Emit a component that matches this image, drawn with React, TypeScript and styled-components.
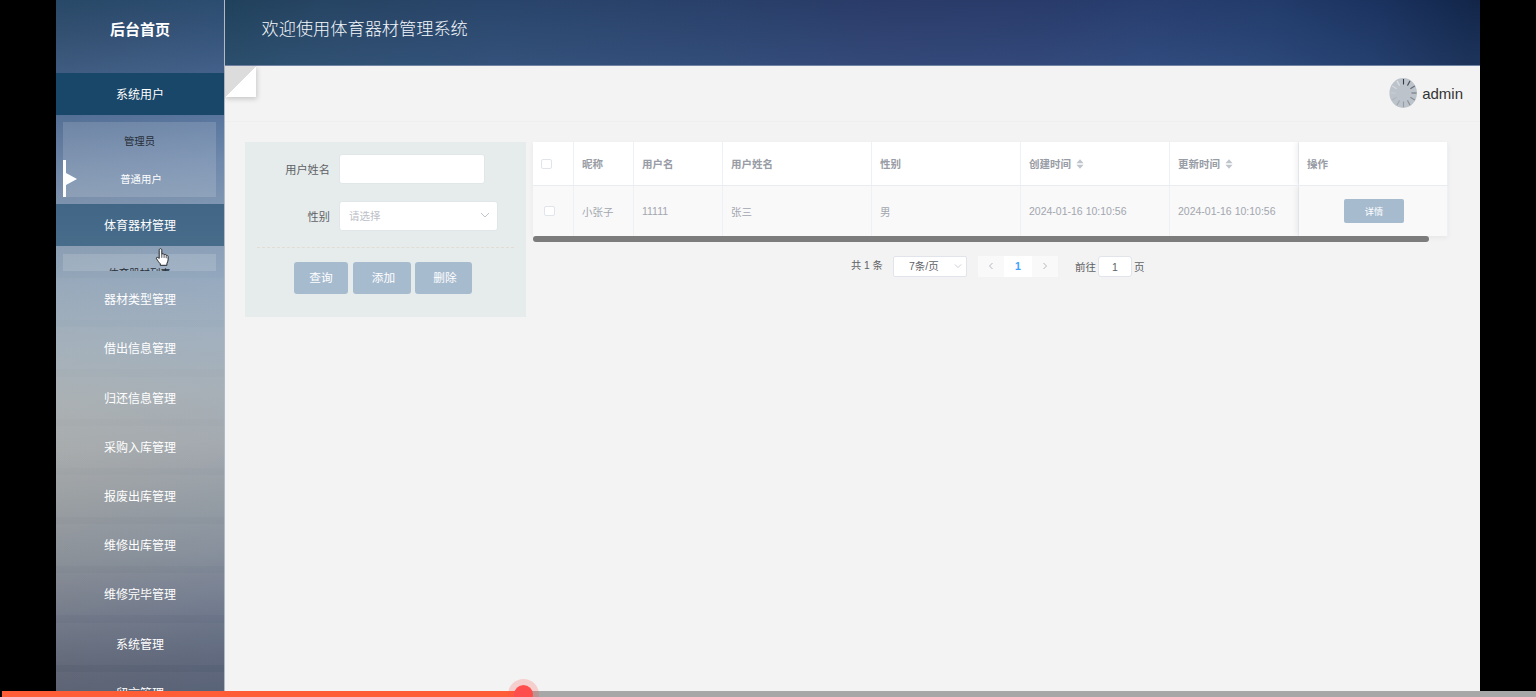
import React from 'react';
import styled, { createGlobalStyle, css } from 'styled-components';

const GlobalStyle = createGlobalStyle`
  * { box-sizing: border-box; }
  body {
    margin: 0;
    background: #000;
    font-family: "Liberation Sans", "Noto Sans CJK SC", sans-serif;
    overflow: hidden;
  }
  button, input { font-family: inherit; }
`;

const Screen = styled.div`
  position: relative;
  height: 697px;
  padding: 0 56px;
  background: #000;
  overflow: hidden;
`;

const Shell = styled.div`
  display: flex;
  height: 697px;
  background: #f3f3f3;
`;

const Sidebar = styled.aside`
  flex: none;
  width: 169px;
  height: 697px;
  overflow: hidden;
  border-right: 1px solid #b1bac5;
  background:
    linear-gradient(90deg, rgba(150, 150, 140, 0.08), rgba(120, 150, 190, 0.1)),
    linear-gradient(176deg, #1f4264 0, #2a496e 32px, #3b5982 80px, #526f98 122px, #6f88aa 175px, #8499b2 225px,
      #95a9bd 285px, #a3b1bd 345px, #aab1b5 400px, #a7abad 450px, #989da2 500px, #868d96 560px, #6d7486 618px,
      #596173 665px, #4e566a 710px);
`;

const Home = styled.div`
  height: 73px;
  padding-top: 19px;
  color: #fff;
  font-size: 15px;
  line-height: 22px;
  font-weight: 700;
  text-align: center;
`;

const Menu = styled.nav`
  display: flex;
  flex-direction: column;
  gap: 7.2px;
`;

const MenuItem = styled.div<{ $tone?: 'active' | 'hover' }>`
  flex: none;
  height: 42px;
  line-height: 44px;
  font-size: 12px;
  color: #fff;
  text-align: center;
  background: ${({ $tone }) =>
    $tone === 'active' ? '#194769' : $tone === 'hover' ? 'linear-gradient(#416686, #486d8b)' : 'rgba(255, 255, 255, 0.03)'};
`;

const SubMenu = styled.div<{ $height: number }>`
  flex: none;
  height: ${({ $height }) => $height}px;
  margin: 0 8px 0 7px;
  overflow: hidden;
  background: rgba(255, 255, 255, 0.14);
`;

const SubItem = styled.div<{ $current?: boolean }>`
  position: relative;
  height: 37.5px;
  line-height: 39px;
  font-size: 10.4px;
  text-align: center;
  color: #272e39;
  ${({ $current }) =>
    $current &&
    css`
      color: #fff;
      border-left: 3px solid #fff;
      &::before {
        content: '';
        position: absolute;
        left: 0;
        top: 13px;
        border: 6px solid transparent;
        border-left: 11px solid #fff;
        border-right: 0;
      }
    `}
`;

const Main = styled.main`
  flex: 1;
  min-width: 0;
`;

const Header = styled.header`
  height: 66px;
  padding: 16px 36.500px;
  border-bottom: 1px solid #7284a4;
  color: #f4f7fa;
  font-size: 17.2px;
  font-weight: 300;
  line-height: 26px;
  background:
    linear-gradient(180deg, rgba(20, 35, 70, 0.14), rgba(80, 115, 165, 0.18)),
    linear-gradient(97deg, #22465f 0, #294967 90px, #2d4a71 280px, #2c4570 490px, #2e3f6e 650px, #2c3f70 810px,
      #2a4275 920px, #243f70 1040px, #1b3462 1150px, #12264a 1240px);
`;

const UserBar = styled.div`
  position: relative;
  display: flex;
  justify-content: flex-end;
  align-items: center;
  gap: 5px;
  height: 56px;
  padding: 0 17px 1px 0;
  border-bottom: 1px solid #efefef;
  font-size: 15px;
  color: #333;
`;

const UserName = styled.span`
  padding-top: 1px;
  line-height: 18px;
`;

const Fold = styled.div`
  position: absolute;
  left: 0;
  top: 0;
  width: 31px;
  height: 31px;
  background: linear-gradient(135deg, #dcdcdc 50%, #fff 50.5%);
  box-shadow: 1px 2px 5px rgba(0, 0, 0, 0.18);
`;

const Content = styled.section`
  display: flex;
  align-items: flex-start;
  gap: 7px;
  padding: 20px 32px 0 20px;
`;

const Filter = styled.form`
  flex: none;
  width: 281px;
  height: 175px;
  padding: 12px 12px 0;
  background: #e6ecec;
`;

const Field = styled.div<{ $gap: number }>`
  display: flex;
  align-items: center;
  gap: 9px;
  height: 30px;
  margin-bottom: ${({ $gap }) => $gap}px;
`;

const Label = styled.label`
  width: 73px;
  padding-bottom: 1px;
  text-align: right;
  font-size: 11.2px;
  color: #606266;
`;

const TextInput = styled.input`
  width: 146px;
  height: 30px;
  border: 1px solid #e1e6e9;
  border-radius: 3px;
  background: #fff;
`;

const Select = styled.div`
  display: flex;
  align-items: center;
  justify-content: space-between;
  width: 159px;
  height: 30px;
  padding: 0 7px 2px 9px;
  border: 1px solid #e1e6e9;
  border-radius: 3px;
  background: #fff;
  font-size: 10.5px;
  color: #bcc0c8;
`;

const Actions = styled.div`
  display: flex;
  height: 47px;
  padding: 14px 0 0 37px;
  border-top: 1px dashed #e2dcd4;
`;

const Button = styled.button<{ $width: number; $gap?: number; $shift?: number }>`
  flex: none;
  width: ${({ $width }) => $width}px;
  height: 32px;
  margin-right: ${({ $gap = 0 }) => $gap}px;
  padding: 0 0 3px ${({ $shift = 0 }) => $shift}px;
  border: 0;
  border-radius: 3px;
  background: #a7bbcf;
  color: #fff;
  font-size: 11.7px;
`;

const Results = styled.div`
  flex: 1;
  min-width: 0;
`;

const Grid = styled.div`
  position: relative;
  height: 94px;
  box-shadow: 0 2px 5px rgba(0, 0, 0, 0.05);
`;

const Row = styled.div<{ $head?: boolean }>`
  display: grid;
  grid-template-columns: 41px 60px 89px 149px 149px 149px 129px 149px;
  height: ${({ $head }) => ($head ? 44 : 50)}px;
  background: ${({ $head }) => ($head ? '#fff' : '#f9f9f9')};
  border-bottom: ${({ $head }) => ($head ? '1px solid #e9edf2' : '0')};
  color: ${({ $head }) => ($head ? '#989ca5' : '#a2a6af')};
  font-size: 10.5px;
  font-weight: ${({ $head }) => ($head ? 700 : 400)};
`;

const Cell = styled.div<{ $pad?: number; $fixed?: boolean }>`
  display: flex;
  align-items: center;
  gap: 5px;
  min-width: 0;
  padding-left: ${({ $pad = 8 }) => $pad}px;
  border-right: 1px solid #edf0f5;
  white-space: nowrap;
  ${({ $fixed }) =>
    $fixed &&
    css`
      background: inherit;
      box-shadow: -3px 0 5px rgba(0, 0, 0, 0.06);
      clip-path: inset(0 0 0 -10px);
    `}
`;

const Check = styled.span`
  width: 11px;
  height: 10px;
  border: 1px solid #e1e4ea;
  border-radius: 2px;
  background: #fff;
`;

const Detail = styled.button`
  width: 60px;
  height: 24px;
  padding: 0;
  border: 0;
  border-radius: 2px;
  background: #a7bbcf;
  color: #fff;
  font-size: 9.2px;
`;

const ScrollThumb = styled.div`
  position: relative;
  width: 896px;
  height: 6px;
  border-radius: 3px;
  background: #7c7c7d;
`;

const Pager = styled.div`
  display: flex;
  align-items: center;
  height: 21px;
  margin: 14px 0 0 318px;
  font-size: 10.5px;
  line-height: 16px;
  color: #606266;
  white-space: nowrap;
`;

const Total = styled.span`
  width: 42px;
  padding-bottom: 2px;
  font-size: 10.2px;
`;

const SizeSelect = styled.span`
  display: flex;
  align-items: center;
  justify-content: space-between;
  width: 74px;
  height: 21px;
  margin-right: 11px;
  padding: 0 4px 2px 15px;
  border: 1px solid #e1e4ea;
  border-radius: 2px;
  background: #fff;
`;

const PageCell = styled.span<{ $current?: boolean; $width: number }>`
  display: flex;
  align-items: center;
  justify-content: center;
  width: ${({ $width }) => $width}px;
  height: 21px;
  padding-bottom: 1px;
  background: ${({ $current }) => ($current ? '#fff' : '#f9f9f9')};
  color: #409eff;
  font-weight: 700;
`;

const Jump = styled.span`
  display: flex;
  align-items: center;
  gap: 2px;
  margin-left: 17px;
`;

const JumpBox = styled.span`
  display: flex;
  align-items: center;
  justify-content: center;
  width: 34px;
  height: 21px;
  border: 1px solid #e1e4ea;
  border-radius: 3px;
  background: #fff;
`;

const Track = styled.div`
  position: absolute;
  left: 2px;
  right: 0;
  bottom: 0;
  height: 6px;
  background: #a7a7a7;
`;

const Played = styled.div`
  width: 522px;
  height: 6px;
  background: #ff5c38;
`;

const Knob = styled.div`
  position: absolute;
  left: 506px;
  top: -12px;
  width: 31px;
  height: 31px;
  border: 6.5px solid rgba(255, 77, 77, 0.22);
  border-radius: 50%;
  background: #ff4d4d;
  background-clip: padding-box;
`;

const Pointer = styled.svg`
  position: absolute;
  left: 154px;
  top: 247px;
`;

const Chevron = ({ d, size = 10, color = '#c0c4cc' }: { d: string; size?: number; color?: string }) => (
  <svg width={size} height={size} viewBox="0 0 10 10" fill="none" stroke={color}>
    <path d={d} />
  </svg>
);

const DOWN = 'M1 3l4 4 4-4';
const LEFT = 'M6.500 2L3.500 5l3 3';
const RIGHT = 'M3.500 2l3 3-3 3';

const SortIcon = () => (
  <svg width="8" height="10" viewBox="0 0 8 10" fill="#c0c4cc">
    <path d="M4 .2L7.600 4.200H.4zM4 9.800L.4 5.800h7.200z" />
  </svg>
);

const SPOKES = ['#343a41', '#4a5057', '#656b72', '#777d84', '#858b92', '#8d939a', '#969ca3', '#a2a8af', '#afb5bc', '#c9cdd2', '#d6d9dd', '#e0e2e5'];

const Avatar = () => (
  <svg width="28" height="30" viewBox="0 0 28 30">
    <ellipse cx="14.200" cy="15" rx="13.800" ry="15" fill="#bdc3cb" />
    <g transform="translate(14.500 15) scale(.93 1)">
      {SPOKES.map((color, i) => (
        <path key={color} d="M0-14V-8.500" stroke={color} strokeWidth="1.200" transform={`rotate(${i * 30})`} />
      ))}
    </g>
  </svg>
);

const MENU = ['器材类型管理', '借出信息管理', '归还信息管理', '采购入库管理', '报废出库管理', '维修出库管理', '维修完毕管理', '系统管理', '留言管理'];

export default function App() {
  return (
    <>
      <GlobalStyle />
      <Screen>
        <Shell>
          <Sidebar>
            <Home>后台首页</Home>
            <Menu>
              <MenuItem $tone="active">系统用户</MenuItem>
              <SubMenu $height={75}>
                <SubItem>管理员</SubItem>
                <SubItem $current>普通用户</SubItem>
              </SubMenu>
              <MenuItem $tone="hover">体育器材管理</MenuItem>
              <SubMenu $height={17.5}>
                <SubItem>体育器材列表</SubItem>
              </SubMenu>
              {MENU.map((name) => (
                <MenuItem key={name}>{name}</MenuItem>
              ))}
            </Menu>
          </Sidebar>
          <Main>
            <Header>欢迎使用体育器材管理系统</Header>
            <UserBar>
              <Fold />
              <Avatar />
              <UserName>admin</UserName>
            </UserBar>
            <Content>
              <Filter>
                <Field $gap={17}>
                  <Label>用户姓名</Label>
                  <TextInput />
                </Field>
                <Field $gap={16}>
                  <Label>性别</Label>
                  <Select>
                    请选择
                    <Chevron d={DOWN} />
                  </Select>
                </Field>
                <Actions>
                  <Button type="button" $width={54} $gap={5}>查询</Button>
                  <Button type="button" $width={58} $gap={4} $shift={3}>添加</Button>
                  <Button type="button" $width={57} $shift={3}>删除</Button>
                </Actions>
              </Filter>
              <Results>
                <Grid>
                  <Row $head>
                    <Cell><Check /></Cell>
                    <Cell>昵称</Cell>
                    <Cell>用户名</Cell>
                    <Cell>用户姓名</Cell>
                    <Cell>性别</Cell>
                    <Cell>创建时间<SortIcon /></Cell>
                    <Cell>更新时间<SortIcon /></Cell>
                    <Cell $fixed>操作</Cell>
                  </Row>
                  <Row>
                    <Cell $pad={11}><Check /></Cell>
                    <Cell>小张子</Cell>
                    <Cell>11111</Cell>
                    <Cell>张三</Cell>
                    <Cell>男</Cell>
                    <Cell>2024-01-16 10:10:56</Cell>
                    <Cell>2024-01-16 10:10:56</Cell>
                    <Cell $fixed $pad={45}><Detail>详情</Detail></Cell>
                  </Row>
                </Grid>
                <ScrollThumb />
                <Pager>
                  <Total>共 1 条</Total>
                  <SizeSelect>
                    7条/页
                    <Chevron d={DOWN} size={8} />
                  </SizeSelect>
                  <PageCell $width={26}><Chevron d={LEFT} color="#b4b8c0" /></PageCell>
                  <PageCell $width={28} $current>1</PageCell>
                  <PageCell $width={26}><Chevron d={RIGHT} color="#b4b8c0" /></PageCell>
                  <Jump>
                    前往
                    <JumpBox>1</JumpBox>
                    页
                  </Jump>
                </Pager>
              </Results>
            </Content>
          </Main>
        </Shell>
        <Pointer width="16" height="20" viewBox="0 0 16 20">
          <path
            d="M5.200 11.500V3.200c0-2 2.600-2 2.600 0v4.200c.5-1 2.200-.8 2.300.3.700-.7 2-.3 2.100.7.900-.5 1.900 0 1.900 1.200v3.200c0 1.600-.8 2.400-1.200 3.700V18.300H6.300v-1.500c-1.200-1.100-2.500-3.100-3.700-4.900-.9-1.400.8-2.400 2.600-.4z"
            fill="#fff"
            stroke="#20242b"
            strokeWidth="1"
          />
          <path d="M7.800 7.400v3.400M10.100 7.900v3M12.200 8.600v2.600" stroke="#20242b" strokeWidth=".8" />
        </Pointer>
        <Track>
          <Played />
          <Knob />
        </Track>
      </Screen>
    </>
  );
}
